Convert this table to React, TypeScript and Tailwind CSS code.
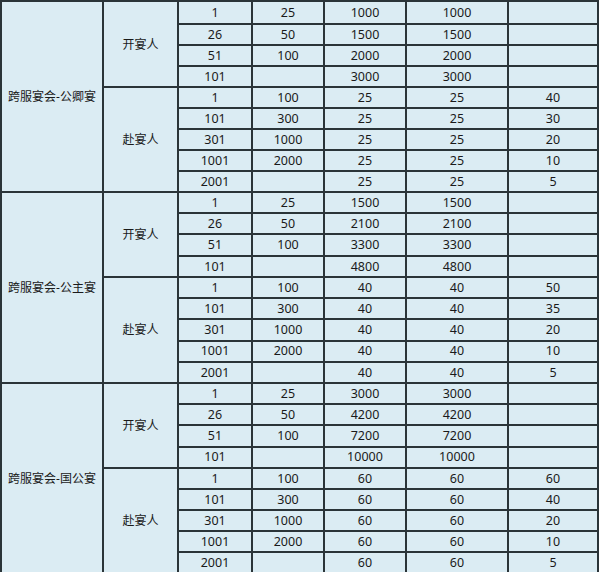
import React from "react";

type Row = (string | number)[];
type Group = { name: string; open: Row[]; attend: Row[] };

const groups: Group[] = [
  {
    name: "跨服宴会-公卿宴",
    open: [
      [1, 25, 1000, 1000, ""],
      [26, 50, 1500, 1500, ""],
      [51, 100, 2000, 2000, ""],
      [101, "", 3000, 3000, ""],
    ],
    attend: [
      [1, 100, 25, 25, 40],
      [101, 300, 25, 25, 30],
      [301, 1000, 25, 25, 20],
      [1001, 2000, 25, 25, 10],
      [2001, "", 25, 25, 5],
    ],
  },
  {
    name: "跨服宴会-公主宴",
    open: [
      [1, 25, 1500, 1500, ""],
      [26, 50, 2100, 2100, ""],
      [51, 100, 3300, 3300, ""],
      [101, "", 4800, 4800, ""],
    ],
    attend: [
      [1, 100, 40, 40, 50],
      [101, 300, 40, 40, 35],
      [301, 1000, 40, 40, 20],
      [1001, 2000, 40, 40, 10],
      [2001, "", 40, 40, 5],
    ],
  },
  {
    name: "跨服宴会-国公宴",
    open: [
      [1, 25, 3000, 3000, ""],
      [26, 50, 4200, 4200, ""],
      [51, 100, 7200, 7200, ""],
      [101, "", 10000, 10000, ""],
    ],
    attend: [
      [1, 100, 60, 60, 60],
      [101, 300, 60, 60, 40],
      [301, 1000, 60, 60, 20],
      [1001, 2000, 60, 60, 10],
      [2001, "", 60, 60, 5],
    ],
  },
];

const cell =
  "border-r-2 border-b-2 border-[#2a3438] flex items-center justify-center pt-px";

function NumCells({ row }: { row: Row }) {
  return (
    <>
      {row.map((v, i) => (
        <div key={i} className={`${cell} text-[12.5px] leading-none`}>
          {v}
        </div>
      ))}
    </>
  );
}

export default function App() {
  return (
    <div className="w-[600px] h-[572px] overflow-hidden bg-white">
      <div
        className="grid grid-cols-[102px_75px_74px_72px_82px_102px_90px] grid-rows-[23px_repeat(8,21px)_repeat(9,21.22px)_repeat(9,21.2px)] w-fit border-l-2 border-t-2 border-[#2a3438] bg-[#dbecf3] text-[#1a1a1a]"
        style={{ fontFamily: '"Noto Sans", "Noto Sans CJK SC", sans-serif' }}
      >
        {groups.map((g) => (
          <React.Fragment key={g.name}>
            <div className={`${cell} row-span-9 text-[12px]`}>{g.name}</div>
            <div className={`${cell} row-span-4 text-[12px]`}>开宴人</div>
            {g.open.map((r, i) => (
              <NumCells key={`o${i}`} row={r} />
            ))}
            <div className={`${cell} row-span-5 text-[12px]`}>赴宴人</div>
            {g.attend.map((r, i) => (
              <NumCells key={`a${i}`} row={r} />
            ))}
          </React.Fragment>
        ))}
      </div>
    </div>
  );
}
